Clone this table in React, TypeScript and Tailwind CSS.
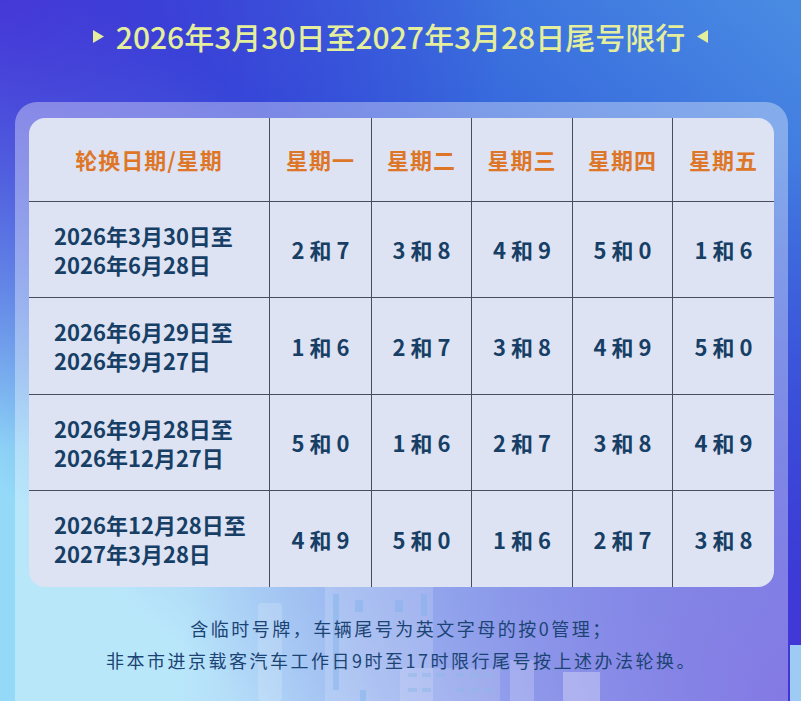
import React from "react";

const days = ["星期一", "星期二", "星期三", "星期四", "星期五"];

const periods = [
  {
    from: "2026年3月30日至",
    to: "2026年6月28日",
    pairs: ["2 和 7", "3 和 8", "4 和 9", "5 和 0", "1 和 6"],
  },
  {
    from: "2026年6月29日至",
    to: "2026年9月27日",
    pairs: ["1 和 6", "2 和 7", "3 和 8", "4 和 9", "5 和 0"],
  },
  {
    from: "2026年9月28日至",
    to: "2026年12月27日",
    pairs: ["5 和 0", "1 和 6", "2 和 7", "3 和 8", "4 和 9"],
  },
  {
    from: "2026年12月28日至",
    to: "2027年3月28日",
    pairs: ["4 和 9", "5 和 0", "1 和 6", "2 和 7", "3 和 8"],
  },
];

const Triangle = ({ flip }: { flip?: boolean }) => (
  <svg width="13" height="15" viewBox="0 0 13 15" className={flip ? "rotate-180" : ""}>
    <path d="M1 1 L12 7.5 L1 14 Z" fill="#e4ee9c" />
  </svg>
);

const Skyline = () => (
  <svg
    className="absolute left-0 top-[587px] w-[801px] h-[114px]"
    viewBox="0 587 801 114"
    fill="none"
  >
    <rect x="258" y="603" width="24" height="98" rx="4" fill="#ffffff" opacity="0.16" />
    <rect x="325" y="587" width="108" height="114" fill="#ffffff" opacity="0.16" />
    <rect x="333" y="594" width="6" height="96" fill="#7fb2ea" opacity="0.45" />
    <rect x="421" y="594" width="6" height="22" fill="#7fb2ea" opacity="0.45" />
    <rect x="355" y="600" width="8" height="12" fill="#7fb2ea" opacity="0.45" />
    <rect x="395" y="600" width="8" height="12" fill="#7fb2ea" opacity="0.45" />
    <rect x="360" y="690" width="6" height="11" fill="#7fb2ea" opacity="0.45" />
    <rect x="400" y="668" width="100" height="33" fill="#ffffff" opacity="0.14" />
    {[408, 422, 436, 456, 470, 484].map((x) => (
      <rect key={`a${x}`} x={x} y="673" width="9" height="4" fill="#8db8e8" opacity="0.5" />
    ))}
    {[408, 422, 456, 470, 484].map((x) => (
      <rect key={`b${x}`} x={x} y="688" width="9" height="4" fill="#8db8e8" opacity="0.5" />
    ))}
    <rect x="510" y="660" width="24" height="41" fill="#ffffff" opacity="0.2" />
    <rect x="563" y="672" width="37" height="29" fill="#ffffff" opacity="0.3" />
    <rect x="790" y="645" width="11" height="56" fill="#a8dcf6" opacity="0.9" />
  </svg>
);

export default function App() {
  return (
    <div
      className="relative w-full h-[701px] overflow-hidden bg-[radial-gradient(ellipse_at_0%_0%,rgba(70,46,214,0.85),transparent_45%),radial-gradient(ellipse_at_100%_100%,#4232d6,transparent_55%),linear-gradient(to_bottom_left,#4a8ce3_0%,#2c56d9_42%,#94daf8_85%)]"
      style={{ fontFamily: '"Noto Sans CJK SC", "Noto Sans", sans-serif' }}
    >
      {/* Title */}
      <div className="h-[72px] flex items-center justify-center gap-[11px]">
        <Triangle />
        <h1 className="text-[30px] leading-none font-medium text-[#e4ee9c]">
          2026年3月30日至2027年3月28日尾号限行
        </h1>
        <Triangle flip />
      </div>

      {/* Panel */}
      <div className="relative mt-[30px] ml-[15px] mr-[13px] h-[620px] rounded-t-[22px] bg-white/35 px-[14px] pt-[16px]">
        <div className="rounded-[16px] overflow-hidden bg-[#dde3f3] grid grid-cols-[240px_102px_100px_101px_100px_102px] grid-rows-[83px_96px_97px_96px_97px]">
          <div className="flex items-center justify-center text-[22px] font-bold text-[#de7628] tracking-[1px]">
            轮换日期/星期
          </div>
          {days.map((d) => (
            <div
              key={d}
              className="flex items-center justify-center border-l border-[#464d5e] text-[22px] font-bold text-[#de7628] tracking-[1px]"
            >
              {d}
            </div>
          ))}

          {periods.map((p) => (
            <React.Fragment key={p.from}>
              <div className="flex flex-col justify-center border-t border-[#464d5e] pl-[25px] text-[22px] leading-[29px] font-bold text-[#173f66]">
                <span>{p.from}</span>
                <span>{p.to}</span>
              </div>
              {p.pairs.map((pair, i) => (
                <div
                  key={i}
                  className="flex items-center justify-center border-t border-l border-[#464d5e] text-[22px] font-bold text-[#173f66] whitespace-pre"
                >
                  {pair}
                </div>
              ))}
            </React.Fragment>
          ))}
        </div>
      </div>

      <Skyline />

      {/* Footnote */}
      <div className="absolute left-[15px] right-[13px] top-[612px] text-center text-[18px] leading-[32px] tracking-[2.5px] text-[#1b4474]">
        <p>含临时号牌，车辆尾号为英文字母的按0管理；</p>
        <p>非本市进京载客汽车工作日9时至17时限行尾号按上述办法轮换。</p>
      </div>
    </div>
  );
}
